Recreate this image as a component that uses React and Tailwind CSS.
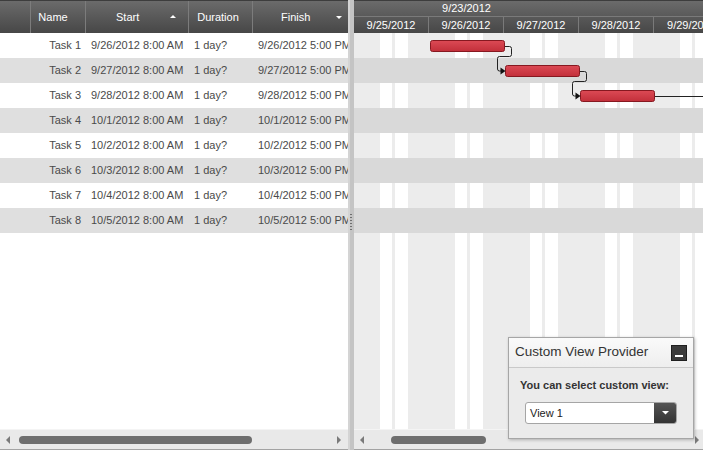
import React from "react";

const rows = [
  ["Task 1", "9/26/2012 8:00 AM", "9/26/2012 5:00 PM"],
  ["Task 2", "9/27/2012 8:00 AM", "9/27/2012 5:00 PM"],
  ["Task 3", "9/28/2012 8:00 AM", "9/28/2012 5:00 PM"],
  ["Task 4", "10/1/2012 8:00 AM", "10/1/2012 5:00 PM"],
  ["Task 5", "10/2/2012 8:00 AM", "10/2/2012 5:00 PM"],
  ["Task 6", "10/3/2012 8:00 AM", "10/3/2012 5:00 PM"],
  ["Task 7", "10/4/2012 8:00 AM", "10/4/2012 5:00 PM"],
  ["Task 8", "10/5/2012 8:00 AM", "10/5/2012 5:00 PM"],
];

const days = ["9/25/2012", "9/26/2012", "9/27/2012", "9/28/2012", "9/29/2012"];

function Tri({ dir, color = "#7a7a7a", size = 4 }) {
  const pts =
    dir === "left"
      ? `${size},0 ${size},${size * 2} 0,${size}`
      : dir === "right"
      ? `0,0 0,${size * 2} ${size},${size}`
      : dir === "up"
      ? `0,${size} ${size * 2},${size} ${size},0`
      : `0,0 ${size * 2},0 ${size},${size}`;
  const w = dir === "left" || dir === "right" ? size : size * 2;
  const h = dir === "left" || dir === "right" ? size * 2 : size;
  return (
    <svg width={w} height={h} className="block shrink-0">
      <polygon points={pts} fill={color} />
    </svg>
  );
}

function Scrollbar({ thumbLeft, thumbWidth, rightArrowRight }) {
  return (
    <div className="h-[21px] shrink-0 bg-[#e9e9e9] border-t border-[#f4f4f4] border-b border-b-[#a3a3a3] flex items-center relative">
      <div className="pl-[6px]">
        <Tri dir="left" />
      </div>
      <div className="h-[8px] rounded-full bg-[#6e6e6e]" style={{ marginLeft: thumbLeft, width: thumbWidth }} />
      <div className="flex-1" />
      <div style={{ paddingRight: rightArrowRight }}>
        <Tri dir="right" />
      </div>
    </div>
  );
}

export default function App() {
  return (
    <div
      className="w-[703px] h-[450px] relative overflow-hidden flex bg-white text-[11px] text-[#4a4a4a]"
      style={{ fontFamily: '"Liberation Sans", Arial, sans-serif' }}
    >
      {/* Grid pane */}
      <div className="w-[348px] shrink-0 flex flex-col">
        <div className="h-[33px] shrink-0 flex bg-gradient-to-b from-[#6b6b6b] to-[#474747] border-t border-[#3d3d3d] text-white">
          <div className="w-[31px] border-r border-[#7c7c7c]" />
          <div className="w-[55px] border-r border-[#7c7c7c] flex items-center justify-center pr-[10px]">Name</div>
          <div className="w-[103px] border-r border-[#7c7c7c] flex items-center relative">
            <span className="ml-[30px]">Start</span>
            <div className="ml-auto mr-[12px] mb-[2px]">
              <Tri dir="up" color="#ffffff" size={3} />
            </div>
          </div>
          <div className="w-[64px] border-r border-[#7c7c7c] flex items-center justify-center pr-[5px]">Duration</div>
          <div className="flex-1 flex items-center">
            <span className="ml-[28px]">Finish</span>
            <div className="ml-auto mr-[6px]">
              <Tri dir="down" color="#ffffff" size={3} />
            </div>
          </div>
        </div>
        {rows.map((r, i) => (
          <div
            key={i}
            className={`h-[25px] shrink-0 flex items-center whitespace-nowrap overflow-hidden ${
              i % 2 === 1 ? "bg-[#dfdfdf]" : "bg-white"
            }`}
          >
            <div className="w-[86px] shrink-0 text-right pr-[5px]">{r[0]}</div>
            <div className="w-[103px] shrink-0 pl-[5px]">{r[1]}</div>
            <div className="w-[64px] shrink-0 pl-[5px]">1 day?</div>
            <div className="pl-[5px]">{r[2]}</div>
          </div>
        ))}
        <div className="flex-1 bg-white" />
        <Scrollbar thumbLeft={9} thumbWidth={233} rightArrowRight={7} />
      </div>

      {/* Splitter */}
      <div className="w-[6px] shrink-0 bg-[#c4c4c4] border-l-2 border-[#d4d4d4] flex flex-col">
        <div className="h-[214px]" />
        <div className="flex flex-col gap-[2px] items-start">
          {[0, 1, 2, 3, 4, 5].map((k) => (
            <div key={k} className="w-[2px] h-[1px] bg-[#6f6f6f]" />
          ))}
        </div>
      </div>

      {/* Gantt pane */}
      <div className="flex-1 flex flex-col min-w-0">
        <div className="h-[33px] shrink-0 bg-gradient-to-b from-[#6b6b6b] to-[#474747] border-t border-[#3d3d3d] text-white flex flex-col overflow-hidden">
          <div className="h-[16px] shrink-0 border-b border-[#7a7a7a] overflow-hidden flex">
            <div className="ml-[-150px] w-[525px] shrink-0 text-center leading-[15px]">9/23/2012</div>
          </div>
          <div className="flex-1 flex overflow-hidden">
            {days.map((d, i) => (
              <div
                key={d}
                className={`w-[75px] shrink-0 text-center leading-[16px] ${i < 4 ? "border-r border-[#7a7a7a]" : ""}`}
              >
                {d}
              </div>
            ))}
          </div>
        </div>
        <div className="flex-1 relative bg-[image:repeating-linear-gradient(to_right,#ececec_0px,#ececec_26px,#ffffff_26px,#ffffff_38px,#ececec_38px,#ececec_41px,#ffffff_41px,#ffffff_54px,#ececec_54px,#ececec_75px)]">
          {rows.map((r, i) => (
            <div key={i} className={`h-[25px] ${i % 2 === 1 ? "bg-[#d9d9d9]" : ""}`} />
          ))}
          <svg className="absolute inset-0" width="349" height="200">
            <defs>
              <linearGradient id="bar" x1="0" y1="0" x2="0" y2="1">
                <stop offset="0" stopColor="#dc4a55" />
                <stop offset="1" stopColor="#c22f3a" />
              </linearGradient>
            </defs>
            {[0, 1, 2].map((k) => (
              <rect
                key={k}
                x={76.5 + k * 75}
                y={7.5 + k * 25}
                width={74}
                height={11}
                rx={2}
                fill="url(#bar)"
                stroke="#861820"
                strokeWidth="1"
              />
            ))}
            {[0, 1].map((k) => {
              const dx = k * 75;
              const dy = k * 25;
              return (
                <g key={k} transform={`translate(${dx},${dy})`}>
                  <path
                    d="M151,13.5 H155.5 Q157.5,13.5 157.5,15.5 V21.5 Q157.5,23.5 155.5,23.5 H145.5 Q143.5,23.5 143.5,25.5 V36 Q143.5,38 145.5,38 H147"
                    fill="none"
                    stroke="#222"
                    strokeWidth="1"
                  />
                  <polygon points="146.5,34.5 151.5,38 146.5,41.5" fill="#111" />
                </g>
              );
            })}
            <line x1="301" y1="63.5" x2="349" y2="63.5" stroke="#222" strokeWidth="1" />
          </svg>
        </div>
        <Scrollbar thumbLeft={27} thumbWidth={95} rightArrowRight={4} />
      </div>

      {/* Custom View Provider panel */}
      <div className="absolute left-[508px] top-[337px] w-[186px] h-[102px] border border-[#a6a6a6] bg-[#ebebeb] shadow-[1px_1px_3px_rgba(0,0,0,0.25)] flex flex-col">
        <div className="h-[30px] shrink-0 bg-gradient-to-b from-[#fafafa] to-[#eeeeee] border-b border-[#c9c9c9] flex items-center pl-[6px] pr-[6px]">
          <span className="text-[13.5px] text-[#333]">Custom View Provider</span>
          <div className="ml-auto w-[16px] h-[16px] bg-[#3b3b3b] border border-[#1f1f1f] flex items-end justify-center pb-[3px]">
            <div className="w-[8px] h-[2px] bg-white" />
          </div>
        </div>
        <div className="flex flex-col pl-[11px] pt-[9px]">
          <div className="font-bold text-[11px] text-[#333] leading-[16px]">You can select custom view:</div>
          <div className="mt-[9px] ml-[5px] w-[152px] h-[22px] bg-white border border-[#a5a5a5] rounded-[3px] flex items-center overflow-hidden">
            <span className="pl-[4px] text-[#222]">View 1</span>
            <div className="ml-auto w-[22px] h-full bg-gradient-to-b from-[#555] to-[#333] flex items-center justify-center">
              <Tri dir="down" color="#ffffff" size={3.5} />
            </div>
          </div>
        </div>
      </div>
    </div>
  );
}
